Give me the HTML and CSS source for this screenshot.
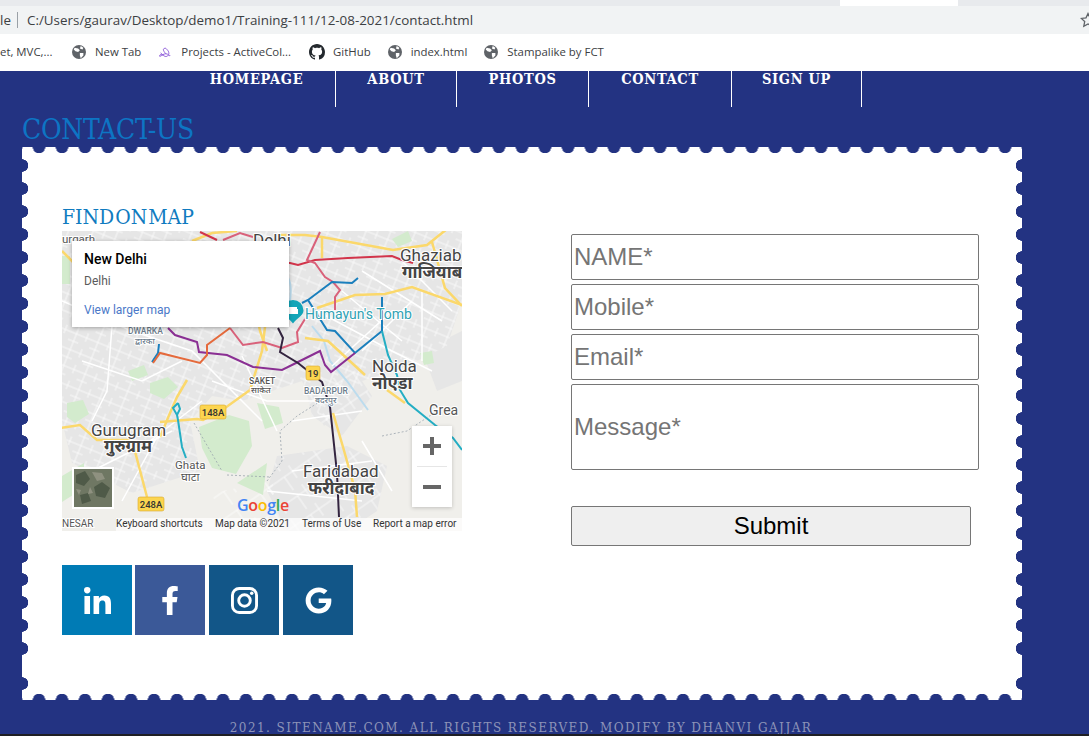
FILE: index.html
```html
<!DOCTYPE html>
<html lang="en">
<head>
  <meta charset="UTF-8">
  <title>Contact Us</title>
  <link rel="stylesheet" href="styles.css">
</head>
<body>
  <svg class="defs" width="0" height="0">
    <symbol id="globe" viewBox="0 0 16 16">
      <circle cx="8" cy="8" r="8" fill="#5f6368"/>
      <path d="M3 3l4 1 2 2-2 2-3-1-2-2zM9 9l4 0 0 3-3 3-1-3zM10 1l3 2-1 2-3-1z" fill="#fff"/>
    </symbol>
  </svg>

  <div class="tabstrip"></div>
  <div class="urlbar">
    <span class="url-scheme">le</span>
    <span class="url-sep"></span>
    <span class="url-text">C:/Users/gaurav/Desktop/demo1/Training-111/12-08-2021/contact.html</span>
    <svg class="star" viewBox="0 0 16 16"><path d="M8 1.500l2 4.300 4.700.6-3.400 3.200.9 4.700L8 12l-4.200 2.300.9-4.700L1.300 6.400 6 5.800z" fill="none" stroke="#5f6368" stroke-width="1.300"/></svg>
  </div>
  <div class="bookmarks">
    <span class="bm bm-cut">et, MVC,...</span>
    <span class="bm"><svg class="bm-ico"><use href="#globe"/></svg>New Tab</span>
    <span class="bm"><svg class="bm-ico" viewBox="0 0 16 16"><path d="M2 13c3-1 4-3 7-3s3 3 5 2M3 9c2 1 4 5 7 4s3-5 1-7-2-3-4-2 0 4 2 6M2 13c-1-2 2-3 4-1" fill="none" stroke="#8e5bd8" stroke-width="1.100"/></svg>Projects - ActiveCol...</span>
    <span class="bm bm-git"><svg class="bm-ico bm-gh" viewBox="0 0 16 16"><path d="M8 0C3.580 0 0 3.580 0 8c0 3.540 2.290 6.530 5.470 7.590.4.070.55-.17.55-.38 0-.19-.01-.82-.01-1.490-2.010.37-2.530-.49-2.690-.94-.09-.23-.48-.94-.82-1.130-.28-.15-.68-.52-.01-.53.63-.01 1.080.58 1.230.82.72 1.210 1.870.87 2.330.66.070-.52.28-.87.51-1.070-1.780-.2-3.640-.89-3.640-3.950 0-.87.31-1.590.82-2.150-.08-.2-.36-1.020.08-2.120 0 0 .67-.21 2.200.82.64-.18 1.320-.27 2-.27.68 0 1.360.09 2 .27 1.530-1.040 2.200-.82 2.200-.82.44 1.100.16 1.920.08 2.120.51.56.82 1.270.82 2.150 0 3.070-1.870 3.750-3.650 3.950.29.25.54.73.54 1.480 0 1.070-.01 1.930-.01 2.200 0 .21.15.46.55.38A8.013 8.013 0 0 0 16 8c0-4.420-3.580-8-8-8z" fill="#24292e"/></svg>GitHub</span>
    <span class="bm"><svg class="bm-ico"><use href="#globe"/></svg>index.html</span>
    <span class="bm"><svg class="bm-ico"><use href="#globe"/></svg>Stampalike by FCT</span>
  </div>

  <div class="page">
    <ul class="nav">
      <li>HOMEPAGE</li>
      <li>ABOUT</li>
      <li>PHOTOS</li>
      <li>CONTACT</li>
      <li>SIGN UP</li>
    </ul>

    <h1 class="page-title">CONTACT-US</h1>

    <div class="stamp">
      <div class="left-col">
        <h2 class="map-title">FIND ON MAP</h2>
        <div class="map">
          <svg class="map-svg" viewBox="0 0 400 300" width="400" height="300">
            <defs>
              <pattern id="streets" width="23" height="17" patternUnits="userSpaceOnUse" patternTransform="rotate(22)">
                <path d="M0 5H23M0 13H11M6 0V17M17 0V9" fill="none" stroke="#fff" stroke-width=".7"/>
              </pattern>
              <pattern id="streets2" width="29" height="23" patternUnits="userSpaceOnUse" patternTransform="rotate(-35)">
                <path d="M0 7H29M12 7V23M22 0V15" fill="none" stroke="#fff" stroke-width=".7"/>
              </pattern>
            </defs>
            <rect width="400" height="300" fill="#f0efeb"/>
            <!-- built up areas -->
            <path class="urban" d="M0 0H400V70L385 115 345 135 300 150 262 195 240 150 180 170 150 165 128 190 138 240 70 262 10 232 0 190z"/>
            <path class="urban" d="M215 225l70-10 40 20-10 45-30 20h-60l-20-40z"/>
            <path class="urban" d="M240 140l50-5 20 30-30 40-30-20z"/>
            <path class="urban" d="M360 120l40-20v50l-25 10z"/>
            <path class="street-a" d="M0 0H400V70L385 115 345 135 300 150 262 195 240 150 180 170 150 165 128 190 138 240 70 262 10 232 0 190z"/>
            <path class="street-b" d="M215 225l70-10 40 20-10 45-30 20h-60l-20-40z"/>
            <path class="street-b" d="M240 140l50-5 20 30-30 40-30-20z"/>
            <path class="street-b" d="M150 262l60-12 10 40-60 5z"/>
            <!-- green areas -->
            <path class="green" d="M5 172l16-3 6 14-14 9-8-6z"/>
            <path class="green" d="M137 196l30-12 20 6 3 25-16 28-24-6-10-20z"/>
            <path class="green" d="M195 172l22 4 4 16-18 6z"/>
            <path class="green" d="M0 245l22-13 0 25-22 14z"/>
            <path class="green" d="M205 232l-4 32-26-12z"/>
            <path class="green" d="M88 152l18-6 10 10-14 12-14-6z"/>
            <path class="green" d="M66 140l16-6 4 10-16 6z"/>
            <path class="green" d="M330 8l16-8 4 10-14 6z"/>
            <path class="green" d="M358 122l12-2 2 12-10 2z"/>
            <path class="green" d="M0 25h8v28h-8z"/>
            <path class="water" d="M250 95L262 110 268 130 285 150 306 179"/>
            <path class="water" d="M222 40c6 8 8 14 6 30"/>
            <!-- minor roads -->
            <path class="road" d="M0 70L70 100 130 120 200 190M20 130L80 150 120 130M50 95L45 160 30 190M75 220L140 170M30 240L110 200M95 206L60 270M150 150L205 170 260 170M180 125L215 200M255 80L330 120 370 140M280 60L340 110M300 40L380 90M340 30L390 80M300 120L350 70M270 135L330 80M360 60L360 130M230 190L300 180M205 260L300 270M230 240L310 230M300 210L330 260M10 30L70 60"/>
            <path class="border" d="M205 250L220 230 218 200 235 185 262 168M165 244L208 246M132 192L160 240M320 205L345 200 375 180"/>
            <!-- highways -->
            <path class="hwy" d="M-2 197L18 194 35 209 70 209 85 266"/>
            <path class="hwy" d="M98 191L135 188 141 189 163 177 188 159 200 120 205 80"/>
            <path class="hwy" d="M125 149L115 166 108 182 98 206"/>
            <path class="hwy" d="M215 4L243 4 260 6 331 19 365 14 385 -2"/>
            <path class="hwy" d="M260 6L260 27"/>
            <path class="hwy" d="M255 77L293 64 323 63 350 56 400 74"/>
            <path class="hwy" d="M370 11L383 57 400 75"/>
            <path class="hwy" d="M271 182L281 216 293 259 295 286"/>
            <path class="hwy" d="M325 159L343 172"/>
            <path class="hwy" d="M243 107L266 110 303 144"/>
            <path class="hwy" d="M205 120L198 100 195 85"/>
            <path class="hwy" d="M0 20L12 32"/>
            <path class="hwy" d="M130 10L150 2 175 0"/>
            <!-- metro lines -->
            <path class="metro m-red" d="M180 30L228 32 236 34 253 29 286 27 330 25 340 29 351 32"/>
            <path class="metro m-red" d="M138 1L155 9"/>
            <path class="metro m-pink" d="M161 9L178 2 191 6"/>
            <path class="metro m-pink" d="M258 1L245 29 253 32 263 46 271 51 278 59 273 66 273 79"/>
            <path class="metro m-pink" d="M168 97L181 114 201 111 220 117 236 111 235 101 243 88"/>
            <path class="metro m-blue" d="M240 72L246 69 270 51 290 52 296 47"/>
            <path class="metro m-blue" d="M246 69L265 99 273 100 293 122 320 100 320 66"/>
            <path class="metro m-blue" d="M97 113L96 122 90 131"/>
            <path class="metro m-purple" d="M106 97L113 104 135 111 137 121 165 124 191 136 220 139 236 131 258 120 263 134 269 141 293 122"/>
            <path class="metro m-orange" d="M91 132L98 122 138 132 145 124 145 114 168 97"/>
            <path class="metro m-dark" d="M216 97L221 107 218 121 236 132 260 151 268 176 275 242 277 286"/>
            <path class="metro m-teal" d="M320 100L326 124 335 144 338 159 346 172 373 194 391 207 400 219"/>
            <path class="metro m-teal" d="M116 172L111 177 115 184 118 178 116 172M115 184L116 189 120 216 124 227"/>
            <!-- shields -->
            <rect class="shield" x="244" y="135" width="14" height="14" rx="2"/>
            <text class="shield-txt" x="251" y="146">19</text>
            <rect class="shield" x="138" y="174" width="26" height="14" rx="2"/>
            <text class="shield-txt" x="151" y="185">148A</text>
            <rect class="shield" x="76" y="266" width="26" height="14" rx="2"/>
            <text class="shield-txt" x="89" y="277">248A</text>
            <!-- pin -->
            <path d="M231 69a10.500 10.500 0 0 1 10.500 10.500c0 5-7 8-10.500 13-3.500-5-10.500-8-10.500-13a10.500 10.500 0 0 1 10.500-10.500z" fill="#12a5b8"/>
            <path d="M227 76h8v2h1v5h-10v-5h1z" fill="#fff"/>
            <!-- labels -->
            <text class="lbl lbl-big" x="191" y="15">Delhi</text>
            <text class="lbl lbl-sm" x="0" y="12">urgarh</text>
            <text class="lbl lbl-big" x="338" y="30">Ghaziab</text>
            <text class="lbl lbl-big lbl-b" x="340" y="47">गाजियाब</text>
            <text class="lbl lbl-teal" x="243" y="88">Humayun's Tomb</text>
            <text class="lbl lbl-dist" x="66" y="103">DWARKA</text>
            <text class="lbl lbl-dist" x="73" y="113">द्वारका</text>
            <text class="lbl lbl-dist lbl-dark" x="187" y="153">SAKET</text>
            <text class="lbl lbl-dist lbl-dark" x="189" y="162">साकेत</text>
            <text class="lbl lbl-big" x="310" y="141">Noida</text>
            <text class="lbl lbl-big lbl-b" x="310" y="158">नोएडा</text>
            <text class="lbl lbl-mid" x="367" y="184">Grea</text>
            <text class="lbl lbl-dist" x="242" y="163">BADARPUR</text>
            <text class="lbl lbl-dist" x="253" y="172">बदरपुर</text>
            <text class="lbl lbl-big" x="29" y="205">Gurugram</text>
            <text class="lbl lbl-big lbl-b" x="42" y="221">गुरुग्राम</text>
            <text class="lbl lbl-sm" x="113" y="238">Ghata</text>
            <text class="lbl lbl-sm" x="119" y="250">घाटा</text>
            <text class="lbl lbl-big" x="241" y="246">Faridabad</text>
            <text class="lbl lbl-big lbl-b" x="246" y="263">फरीदाबाद</text>
            <!-- satellite thumb -->
            <rect x="10" y="236" width="42" height="42" fill="#fff"/>
            <rect x="12" y="238" width="38" height="38" fill="#6f7763"/>
            <path d="M14 244l9-4 5 8-6 7-8-3zM32 256l8-5 8 6-5 10-9-2zM18 264l8-2 3 8-9 3z" fill="#4f5a48"/>
            <path d="M30 241l10 1 3 6-8 2zM14 258l5 1-2 5zM28 256l3 6-5 1z" fill="#8f9180"/>
            <!-- google logo -->
            <text class="g-logo" x="175" y="280"><tspan fill="#4285f4">G</tspan><tspan fill="#ea4335">o</tspan><tspan fill="#fbbc05">o</tspan><tspan fill="#4285f4">g</tspan><tspan fill="#34a853">l</tspan><tspan fill="#ea4335">e</tspan></text>
            <!-- attribution -->
            <rect x="54" y="287" width="346" height="13" fill="#fff" opacity=".7"/>
            <text class="lbl lbl-sm lbl-nes" x="0" y="296">NESAR</text>
            <text class="attr" x="54" y="296">Keyboard shortcuts</text>
            <text class="attr" x="153" y="296">Map data ©2021</text>
            <text class="attr" x="240" y="296">Terms of Use</text>
            <text class="attr" x="311" y="296">Report a map error</text>
          </svg>

          <div class="info-win">
            <div class="info-name">New Delhi</div>
            <div class="info-addr">Delhi</div>
            <div class="info-link">View larger map</div>
          </div>

          <div class="zoom-ctl">
            <div class="zoom-btn"><svg viewBox="0 0 18 18" width="18" height="18"><path d="M7 0h4v7h7v4h-7v7H7v-7H0V7h7z" fill="#666"/></svg></div>
            <div class="zoom-div"></div>
            <div class="zoom-btn"><svg viewBox="0 0 18 18" width="18" height="18"><path d="M0 7h18v4H0z" fill="#666"/></svg></div>
          </div>
        </div>

        <div class="social">
          <a class="soc soc-in"><svg class="soc-ico" viewBox="0 0 448 448"><path d="M100.280 448H7.400V148.900h92.880zM53.790 108.100C24.090 108.100 0 83.500 0 53.800a53.790 53.790 0 0 1 107.580 0c0 29.700-24.100 54.300-53.790 54.300zM447.900 448h-92.680V302.400c0-34.700-.7-79.200-48.290-79.200-48.290 0-55.690 37.700-55.690 76.700V448h-92.780V148.900h89.080v40.800h1.300c12.400-23.500 42.690-48.300 87.880-48.300 94 0 111.280 61.900 111.280 142.300V448z"/></svg></a>
          <a class="soc soc-fb"><svg class="soc-ico soc-ico-f" viewBox="0 0 320 512"><path d="M279.140 288l14.220-92.660h-88.910v-60.130c0-25.350 12.420-50.060 52.240-50.060h40.420V6.260S260.430 0 225.360 0c-73.220 0-121.080 44.380-121.080 124.720v70.620H22.890V288h81.390v224h100.170V288z"/></svg></a>
          <a class="soc soc-ig"><svg class="soc-ico" viewBox="0 0 28 28"><rect x="1.500" y="1.500" width="25" height="25" rx="7" fill="none" stroke="#fff" stroke-width="3"/><circle cx="14" cy="14" r="6" fill="none" stroke="#fff" stroke-width="3"/><circle cx="21.500" cy="6.500" r="1.800"/></svg></a>
          <a class="soc soc-ig"><svg class="soc-ico" viewBox="0 0 488 512"><path d="M488 261.800C488 403.300 391.100 504 248 504 110.800 504 0 393.200 0 256S110.800 8 248 8c66.800 0 123 24.500 166.300 64.900l-67.500 64.900C258.500 52.600 94.300 116.600 94.300 256c0 86.500 69.100 156.600 153.700 156.600 98.200 0 135-70.400 140.800-106.900H248v-85.300h236.100c2.300 12.700 3.900 24.900 3.900 41.400z"/></svg></a>
        </div>
      </div>

      <form class="contact-form">
        <input class="field" type="text" placeholder="NAME*">
        <input class="field" type="text" placeholder="Mobile*">
        <input class="field" type="text" placeholder="Email*">
        <input class="field field-msg" type="text" placeholder="Message*">
        <button class="submit" type="button">Submit</button>
      </form>
    </div>

    <p class="footer">2021. SITENAME.COM. ALL RIGHTS RESERVED. MODIFY BY DHANVI GAJJAR</p>
  </div>
  <div class="taskbar-edge"></div>
</body>
</html>
```

FILE: styles.css
```css
:root {
  --navy: #233382;
  --link-blue: #0d75c4;
}
html, body {
  margin: 0;
  height: 736px;
  overflow: hidden;
  background: var(--navy);
}
.defs {
  display: block;
  height: 0;
}

/* browser chrome */
.tabstrip {
  height: 6px;
  background: linear-gradient(to right, #e8eaed 840px, #fff 840px, #fff 958px, #e8eaed 958px);
}
.urlbar {
  height: 28px;
  background: #f1f3f4;
  display: flex;
  align-items: center;
  font-family: "Open Sans", sans-serif;
  font-size: 13.400px;
  color: #3c4043;
  overflow: hidden;
}
.url-scheme {
  width: 17px;
}
.url-sep {
  width: 1px;
  height: 16px;
  background: #9aa0a6;
  margin-right: 9px;
}
.url-text {
  flex: 1;
}
.star {
  width: 16px;
  height: 16px;
  margin-right: -7px;
}
.bookmarks {
  box-sizing: border-box;
  height: 37px;
  padding-bottom: 2px;
  background: #fff;
  display: flex;
  align-items: center;
  gap: 17px;
  font-family: "Open Sans", sans-serif;
  font-size: 11.400px;
  color: #3c4043;
}
.bm {
  display: flex;
  align-items: center;
  gap: 9px;
  white-space: nowrap;
}
.bm-cut {
  width: 55px;
  overflow: hidden;
}
.bm-ico {
  width: 14px;
  height: 14px;
}
.bm-git {
  gap: 8px;
  margin-left: 1px;
}
.bm-gh {
  width: 16px;
  height: 16px;
}

/* page */
.page {
  height: 665px;
  background: var(--navy);
  overflow: hidden;
}
.nav {
  list-style: none;
  margin: 0;
  padding: 0 0 0 178px;
  display: flex;
  height: 36px;
}
.nav li {
  box-sizing: border-box;
  text-align: center;
  border-right: 1px solid #fff;
  color: #fff;
  font-family: "DejaVu Serif Condensed", "DejaVu Serif", serif;
  font-weight: bold;
  font-size: 14.500px;
  line-height: 16px;
  letter-spacing: .7px;
}
.nav li:nth-child(1) { width: 158px; }
.nav li:nth-child(2) { width: 121px; }
.nav li:nth-child(3) { width: 132px; }
.nav li:nth-child(4) { width: 143px; }
.nav li:nth-child(5) { width: 130px; }
.page-title {
  margin: 8px 0 0 22px;
  height: 32px;
  font-family: "DejaVu Serif Condensed", "DejaVu Serif", serif;
  font-weight: normal;
  font-size: 28px;
  line-height: 30px;
  letter-spacing: -.3px;
  color: var(--link-blue);
}

/* stamp card with punched edges */
.stamp {
  position: relative;
  width: 1000px;
  height: 553px;
  margin-left: 22px;
  display: flex;
  background-color: #fff;
  background-image:
    radial-gradient(circle at 50% 0, var(--navy) 6px, transparent 6.500px),
    radial-gradient(circle at 50% 100%, var(--navy) 6px, transparent 6.500px),
    radial-gradient(circle at 0 50%, var(--navy) 6px, transparent 6.500px),
    radial-gradient(circle at 100% 50%, var(--navy) 6px, transparent 6.500px);
  background-size: 23px 8px, 23px 8px, 8px 23px, 8px 23px;
  background-repeat: repeat-x, repeat-x, no-repeat, no-repeat;
  background-position: 5.500px 0, 5.500px 100%, 0 524.500px, 100% 524.500px;
}
.stamp::before,
.stamp::after {
  content: "";
  position: absolute;
  top: 6.500px;
  width: 8px;
  height: 506px;
  background-size: 8px 23px;
  background-repeat: repeat-y;
}
.stamp::before {
  left: 0;
  background-image: radial-gradient(circle at 0 50%, var(--navy) 6px, transparent 6.500px);
}
.stamp::after {
  right: 0;
  background-image: radial-gradient(circle at 100% 50%, var(--navy) 6px, transparent 6.500px);
}
.left-col {
  width: 400px;
  margin-left: 40px;
  padding-top: 57px;
}
.map-title {
  margin: 0 0 4px;
  height: 23px;
  font-family: "DejaVu Serif Condensed", "DejaVu Serif", serif;
  font-weight: normal;
  font-size: 21px;
  line-height: 26px;
  letter-spacing: 0;
  word-spacing: -5px;
  color: #0f7bc0;
}

/* map */
.map {
  position: relative;
  width: 400px;
  height: 300px;
  overflow: hidden;
  font-family: Roboto, sans-serif;
}
.map-svg {
  display: block;
}
.urban { fill: #e6e6e6; }
.street-a { fill: url(#streets); }
.street-b { fill: url(#streets2); }
.green { fill: #d3ebcd; }
.water {
  fill: none;
  stroke: #bcdcee;
  stroke-width: 2;
}
.road {
  fill: none;
  stroke: #fff;
  stroke-width: 1.500;
}
.border {
  fill: none;
  stroke: #9aa5ad;
  stroke-width: .8;
  stroke-dasharray: 2 2;
}
.hwy {
  fill: none;
  stroke: #fbd86b;
  stroke-width: 2.500;
}
.metro {
  fill: none;
  stroke-width: 2;
}
.m-red { stroke: #d2344a; }
.m-pink { stroke: #d9617a; }
.m-blue { stroke: #1a7fbd; }
.m-purple { stroke: #8a2f93; }
.m-orange { stroke: #e56a3c; }
.m-dark { stroke: #33243f; }
.m-teal { stroke: #24aec4; }
.shield {
  fill: #fcd54f;
  stroke: #d9a92c;
  stroke-width: .6;
}
.shield-txt {
  font-size: 9.500px;
  font-weight: 500;
  text-anchor: middle;
  fill: #333;
}
.lbl {
  font-family: Roboto, "Noto Sans", sans-serif;
  fill: #444;
  stroke: #fff;
  stroke-width: 2px;
  paint-order: stroke;
}
.lbl-big { font-size: 17px; }
.lbl-mid { font-size: 14px; fill: #555; }
.lbl-sm { font-size: 11.500px; fill: #555; }
.lbl-b { font-weight: 700; }
.lbl-teal { font-size: 14px; fill: #2fa2b4; }
.lbl-dist { font-size: 8.500px; font-weight: 500; fill: #6d7d8c; }
.lbl-dark { fill: #555; }
.lbl-nes { font-size: 10px; }
.g-logo {
  font-family: "Open Sans", sans-serif;
  font-size: 16px;
  font-weight: 600;
  letter-spacing: -.3px;
}
.attr {
  font-size: 10px;
  fill: #333;
}
.info-win {
  position: absolute;
  left: 10px;
  top: 10px;
  width: 193px;
  height: 86px;
  padding: 0 12px;
  background: #fff;
  box-shadow: 0 1px 4px rgba(0, 0, 0, .3);
}
.info-name {
  margin-top: 10px;
  font-size: 14px;
  font-weight: 500;
  line-height: 16px;
  color: #000;
}
.info-addr {
  margin-top: 6px;
  font-size: 12px;
  line-height: 16px;
  color: #5b5b5b;
}
.info-link {
  margin-top: 13px;
  font-size: 12px;
  line-height: 16px;
  color: #4a78c8;
}
.zoom-ctl {
  position: absolute;
  left: 350px;
  top: 195px;
  width: 40px;
  height: 81px;
  background: #fff;
  box-shadow: 0 1px 4px rgba(0, 0, 0, .2);
}
.zoom-btn {
  height: 40px;
  display: flex;
  align-items: center;
  justify-content: center;
}
.zoom-div {
  height: 1px;
  margin: 0 5px;
  background: #e6e6e6;
}

/* social squares */
.social {
  display: flex;
  gap: 4px;
  margin-top: 34px;
}
.soc {
  width: 70px;
  height: 70px;
  display: flex;
  align-items: center;
  justify-content: center;
}
.soc-in {
  background: #007bb5;
  margin-right: -1px;
}
.soc-fb { background: #3b5998; }
.soc-ig { background: #125688; }
.soc-ico {
  width: 27px;
  height: 27px;
  fill: #fff;
}
.soc-ico-f {
  width: 18px;
  height: 29px;
}

/* form */
.contact-form {
  width: 408px;
  margin-left: 109px;
  padding-top: 87px;
  display: flex;
  flex-direction: column;
  gap: 4px;
  align-items: flex-start;
}
.field {
  box-sizing: border-box;
  width: 408px;
  height: 46px;
  margin: 0;
  padding: 1px 2px;
  border: 1px solid #767676;
  border-radius: 2px;
  background: #fff;
  font-family: "Liberation Sans", Arial, sans-serif;
  font-size: 24px;
}
.field::placeholder {
  color: #757575;
  opacity: 1;
}
.field-msg {
  height: 86px;
}
.submit {
  box-sizing: border-box;
  width: 400px;
  height: 40px;
  margin-top: 32px;
  padding: 0;
  border: 1px solid #767676;
  border-radius: 2px;
  background: #efefef;
  color: #000;
  font-family: "Liberation Sans", Arial, sans-serif;
  font-size: 24px;
}

/* footer */
.footer {
  margin: 20px 0 0;
  text-align: center;
  width: 1042px;
  font-family: "DejaVu Serif", serif;
  font-size: 12px;
  line-height: 16px;
  letter-spacing: 1.450px;
  color: #8d93b8;
}
.taskbar-edge {
  height: 2px;
  margin-top: -2px;
  position: relative;
  background: #1f1f24;
}
```
